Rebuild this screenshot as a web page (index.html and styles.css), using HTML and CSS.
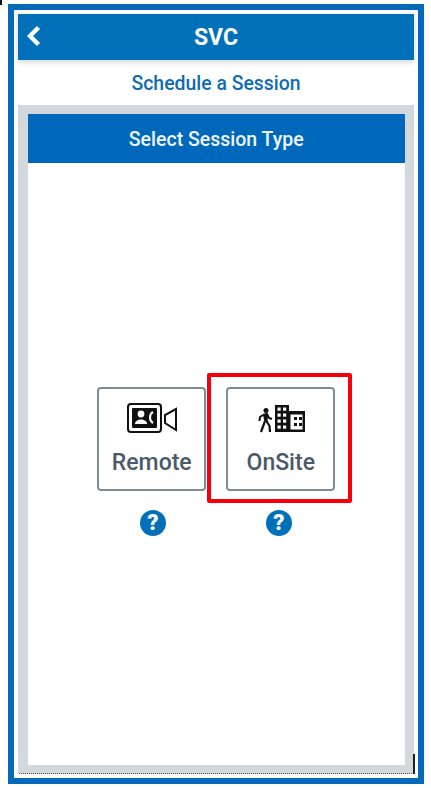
FILE: index.html
```html
<!DOCTYPE html>
<html lang="en">
<head>
  <meta charset="UTF-8" />
  <title>SVC</title>
  <meta name="viewport" content="width=device-width, initial-scale=1" />
  <link rel="stylesheet" href="styles.css">
</head>
<body>
  <div class="corner-mark"></div>
  <div class="frame">
    <!-- Top bar -->
    <div class="app-bar">
      <svg class="back-icon" width="16" height="22" viewBox="0 0 16 22">
        <path d="M12.5 2.5 L4 11 L12.5 19.5" fill="none" stroke="#fff" stroke-width="4.4" />
      </svg>
      <div class="app-title">SVC</div>
    </div>
    <div class="page-title">Schedule a Session</div>

    <div class="panel">
      <div class="panel-inner">
        <div class="panel-head">Select Session Type</div>
        <div class="panel-body">
          <div class="type-grid">
            <button class="type-btn">
              <svg class="type-icon" width="52" height="32" viewBox="0 0 52 32">
                <rect x="2" y="1" width="33" height="28" rx="3" fill="none" stroke="#111" stroke-width="2" />
                <rect x="6" y="5" width="25" height="20" rx="1" fill="#111" />
                <circle cx="15" cy="11" r="3.4" fill="#fff" />
                <path d="M9 21 C9 15 21 15 21 21 Z" fill="#fff" />
                <path d="M27 9 A5 6 0 0 0 27 20" fill="none" stroke="#fff" stroke-width="2" />
                <path d="M50 6 L39 12 L39 20 L50 27 Z" fill="none" stroke="#111" stroke-width="2" />
              </svg>
              <span>Remote</span>
            </button>
            <button class="type-btn type-btn-marked">
              <svg class="type-icon" width="50" height="32" viewBox="0 0 50 32">
                <circle cx="10" cy="7.5" r="2.5" fill="#111" />
                <path d="M7 12 L11 11 L13 15 L16 16 M7 12 L4 14 L3.5 18" fill="none" stroke="#111" stroke-width="2" />
                <path d="M7 11.5 L12 11 L11.5 19 L8.5 19 Z" fill="#111" />
                <path d="M9 18 L5 29 M10.5 18 L13.5 23 L14 29" fill="none" stroke="#111" stroke-width="2.2" />
                <path d="M19 2 H33 V8 H49 V29 H19 Z" fill="#111" />
                <g fill="#fff">
                  <rect x="21.5" y="4.5" width="3.2" height="3.2" /><rect x="27" y="4.5" width="3.2" height="3.2" />
                  <rect x="21.5" y="10.5" width="3.2" height="3.2" /><rect x="27" y="10.5" width="3.2" height="3.2" />
                  <rect x="21.5" y="16.5" width="3.2" height="3.2" /><rect x="27" y="16.5" width="3.2" height="3.2" />
                  <rect x="21.5" y="22.5" width="3.2" height="3.2" /><rect x="27" y="22.5" width="3.2" height="3.2" />
                  <rect x="34.5" y="11.5" width="12" height="15" />
                </g>
                <g fill="#111">
                  <rect x="38" y="14" width="3" height="3" /><rect x="43" y="14" width="3" height="3" />
                  <rect x="38" y="20" width="3" height="3" /><rect x="43" y="20" width="3" height="3" />
                </g>
              </svg>
              <span>OnSite</span>
            </button>
            <div class="help-icon help-left">?</div>
            <div class="help-icon help-right">?</div>
          </div>
        </div>
      </div>
      <div class="dotted-line"></div>
      <div class="scroll-mark"></div>
    </div>
  </div>
</body>
</html>
```

FILE: styles.css
```css
body {
  margin: 0;
  background: #fff;
  font-family: 'Roboto', Arial, sans-serif;
  color: #4a5a6a;
}
.corner-mark {
  position: absolute;
  top: 0;
  left: 0;
  width: 2px;
  height: 5px;
  background: #111;
}
.frame {
  box-sizing: border-box;
  width: 416px;
  height: 780px;
  margin: 4px 0 0 8px;
  border: 6px solid #0568b8;
  padding: 4px;
  display: flex;
  flex-direction: column;
}
.app-bar {
  height: 46px;
  flex: none;
  background: #0071b8;
  box-shadow: 0 2px 6px rgba(0,0,0,0.18);
  display: flex;
  align-items: center;
  justify-content: center;
  position: relative;
}
.back-icon {
  position: absolute;
  left: 8px;
  top: 11px;
}
.app-title {
  color: #fff;
  font-size: 23px;
  font-weight: 700;
}
.page-title {
  box-sizing: border-box;
  height: 45px;
  flex: none;
  padding-top: 2px;
  display: flex;
  align-items: center;
  justify-content: center;
  color: #0f6cb2;
  font-size: 19.4px;
  font-weight: 500;
}
.panel {
  flex: 1;
  background: #d3d8dc;
  padding: 9px 9px 9px 9.5px;
  display: flex;
  position: relative;
}
.panel-inner {
  flex: 1;
  background: #fff;
  display: flex;
  flex-direction: column;
}
.panel-head {
  box-sizing: border-box;
  height: 49px;
  flex: none;
  padding-top: 2px;
  background: #0068bb;
  color: #eef5fb;
  font-size: 19.5px;
  font-weight: 500;
  display: flex;
  align-items: center;
  justify-content: center;
}
.panel-body {
  flex: 1;
  padding-top: 224px;
  display: flex;
  justify-content: center;
}
.type-grid {
  display: grid;
  grid-template-columns: 109px 109px;
  grid-template-rows: 104px 26px;
  column-gap: 20px;
  row-gap: 19px;
  justify-items: center;
}
.type-btn {
  box-sizing: border-box;
  width: 109px;
  height: 104px;
  background: #fff;
  border: 2px solid #7f8c96;
  border-radius: 4px;
  padding: 14px 0 0 0;
  font-family: inherit;
  font-size: 23px;
  font-weight: 500;
  color: #4a5a6a;
  display: flex;
  flex-direction: column;
  align-items: center;
  gap: 14px;
  position: relative;
}
/* red highlight drawn over the screenshot */
.type-btn-marked::after {
  content: "";
  position: absolute;
  top: -16px;
  left: -21px;
  right: -19px;
  bottom: -14px;
  border: 4px solid #f6000c;
  border-radius: 2px;
}
.type-icon {
  display: block;
}
.help-icon {
  width: 26px;
  height: 26px;
  border-radius: 50%;
  background: #0071b8;
  color: #fff;
  font-size: 22px;
  font-weight: 900;
  line-height: 26px;
  text-align: center;
}
.help-left {
  margin-left: 2px;
}
.help-right {
  margin-right: 4px;
}
.dotted-line {
  position: absolute;
  left: 1px;
  right: 2px;
  bottom: 0;
  border-bottom: 1px dotted #555;
}
.scroll-mark {
  position: absolute;
  right: -1px;
  bottom: 0;
  width: 2px;
  height: 20px;
  background: #222;
}
```
